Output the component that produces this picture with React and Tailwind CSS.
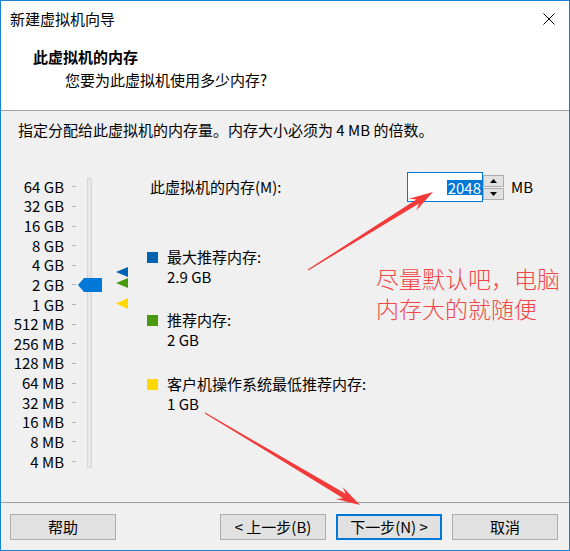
import React from "react";

const labels = ["64 GB","32 GB","16 GB","8 GB","4 GB","2 GB","1 GB","512 MB","256 MB","128 MB","64 MB","32 MB","16 MB","8 MB","4 MB"];

function Legend({ color, title, value, className }) {
  return (
    <div className={"flex " + className}>
      <div className="w-[20px] h-[20px] flex items-center">
        <div className={"w-[11px] h-[11px] " + color}></div>
      </div>
      <div className="flex flex-col">
        <div className="leading-[20px] h-[20px] whitespace-nowrap">{title}</div>
        <div className="leading-[20px] h-[20px]">{value}</div>
      </div>
    </div>
  );
}

function Btn({ children, primary }) {
  return (
    <div
      className={
        "w-[106px] h-[26px] flex items-center justify-center bg-[#e1e1e1] leading-[20px] " +
        (primary ? "border-2 border-[#0078d7]" : "border border-[#adadad]")
      }
    >
      {children}
    </div>
  );
}

export default function App() {
  return (
    <div className="relative w-[570px] h-[551px] border border-[#1883d7] bg-[#f0f0f0] flex flex-col text-[15px] text-black font-['Noto_Sans_CJK_SC',sans-serif] overflow-hidden">
      {/* Header */}
      <div className="h-[110px] shrink-0 bg-white border-b border-[#a0a0a0] flex flex-col">
        <div className="h-[36px] flex items-center pl-[9px] pr-[14px]">
          <span className="leading-[20px]">新建虚拟机向导</span>
          <svg className="ml-auto" width="12" height="12" viewBox="0 0 12 12">
            <path d="M0.5 0.5 L11.5 11.5 M11.5 0.5 L0.5 11.5" stroke="#000" strokeWidth="1" fill="none" />
          </svg>
        </div>
        <div className="mt-[10px] pl-[32px] leading-[20px] font-bold">此虚拟机的内存</div>
        <div className="mt-[3px] pl-[64px] leading-[20px]">您要为此虚拟机使用多少内存?</div>
      </div>

      {/* Body */}
      <div className="flex-1 flex flex-col">
        <div className="pt-[9px] pl-[17px] leading-[20px] whitespace-nowrap">
          指定分配给此虚拟机的内存量。内存大小必须为 4 MB 的倍数。
        </div>
        <div className="mt-[32px] flex">
          {/* Slider */}
          <div className="relative w-[146px] flex items-start">
            <div className="mt-[5px] flex flex-col">
              {labels.map((l) => (
                <div key={l} className="h-[19.64px] flex items-center">
                  <div className="w-[63px] text-right leading-[18px] whitespace-nowrap">{l}</div>
                  <div className="ml-[8px] w-[4px] h-px bg-[#b4b4b4]"></div>
                </div>
              ))}
            </div>
            <div className="ml-[11px] mt-[6px] w-[5px] h-[290px] bg-[#e7e7e7] border border-[#d6d6d6]"></div>
            {/* thumb */}
            <svg className="absolute left-[77px] top-[106px]" width="24" height="14" viewBox="0 0 24 14">
              <polygon points="0,7 6,0 24,0 24,14 6,14" fill="#0078d7" />
            </svg>
            {/* markers */}
            <svg className="absolute left-[115px] top-[95px]" width="12" height="44" viewBox="0 0 12 44">
              <polygon points="0,5 12,0 12,10" fill="#0063b1" />
              <polygon points="0,16 12,11 12,21" fill="#4a9a10" />
              <polygon points="0,36.5 12,31 12,42" fill="#ffd800" />
            </svg>
          </div>

          {/* Right side */}
          <div className="flex flex-col">
            <div className="h-[30px] flex items-center">
              <div className="w-[260px] pl-[3px] leading-[20px] whitespace-nowrap">此虚拟机的内存(M):</div>
              <div className="w-[76px] h-[30px] border border-[#0078d7] bg-white flex items-center justify-end">
                <span className="bg-[#0078d7] text-white leading-[15px] h-[15px] px-[1px] flex items-center">2048</span>
              </div>
              <div className="w-[21px] h-[30px] flex flex-col justify-center gap-[1px]">
                <div className="h-[12px] border border-[#adadad] bg-[#e1e1e1] flex items-center justify-center">
                  <svg width="7" height="4" viewBox="0 0 7 4"><polygon points="3.5,0 7,4 0,4" fill="#000" /></svg>
                </div>
                <div className="h-[12px] border border-[#adadad] bg-[#e1e1e1] flex items-center justify-center">
                  <svg width="7" height="4" viewBox="0 0 7 4"><polygon points="0,0 7,0 3.5,4" fill="#000" /></svg>
                </div>
              </div>
              <div className="ml-[7px] leading-[20px]">MB</div>
            </div>
            <Legend className="mt-[45px]" color="bg-[#0063b1]" title="最大推荐内存:" value="2.9 GB" />
            <Legend className="mt-[23px]" color="bg-[#4a9a10]" title="推荐内存:" value="2 GB" />
            <Legend className="mt-[24px]" color="bg-[#ffd800]" title="客户机操作系统最低推荐内存:" value="1 GB" />
          </div>
        </div>
      </div>

      {/* Footer */}
      <div className="h-[48px] shrink-0 border-t border-[#a0a0a0] pt-[11px] pl-[9px] pr-[11px] flex">
        <Btn>帮助</Btn>
        <div className="ml-auto flex gap-[10px]">
          <Btn>&lt; 上一步(B)</Btn>
          <Btn primary>下一步(N) &gt;</Btn>
          <Btn>取消</Btn>
        </div>
      </div>

      {/* Annotations */}
      <div className="absolute left-[375px] top-[262px] text-[23px] leading-[30px] text-[#f24646] font-light whitespace-nowrap">
        尽量默认吧，电脑<br />内存大的就随便
      </div>
      <svg className="absolute left-[-1px] top-[-1px] pointer-events-none" width="570" height="551" viewBox="0 0 570 551">
        <polygon
          points="308.26,270.42 419.0,203.6 416.3,210.6 433,192 408.9,198.8 416.4,199.4 307.7,269.6"
          fill="#f33a3a"
        />
        <polygon
          points="204.75,413.43 343.1,498.2 335.7,499.1 360,505 342.7,487.0 345.7,493.8 205.25,412.57"
          fill="#f33a3a"
        />
      </svg>
    </div>
  );
}
